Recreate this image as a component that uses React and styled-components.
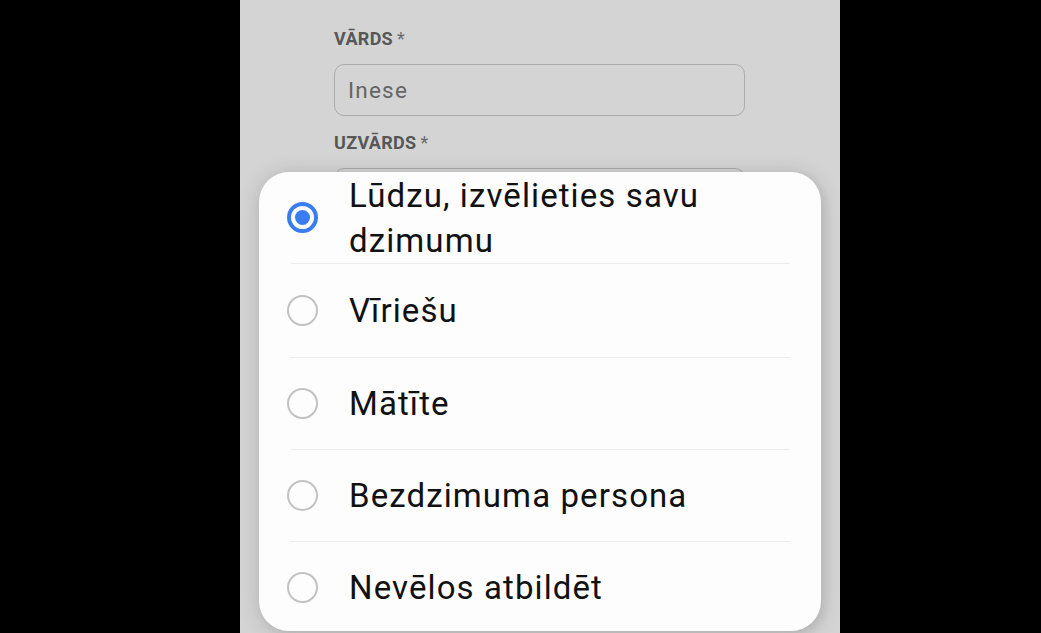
import React from "react";
import styled, { createGlobalStyle } from "styled-components";

const Global = createGlobalStyle`
  html, body { margin: 0; padding: 0; background: #000; }
  body { font-family: Roboto, "Noto Sans", sans-serif; }
`;

const Page = styled.div`
  display: flex;
  padding-left: 240px;
  height: 633px;
  background: #000;
`;

const Phone = styled.div`
  position: relative;
  width: 600px;
  height: 633px;
  background: #d4d4d4;
  overflow: hidden;
`;

const Form = styled.div`
  display: flex;
  flex-direction: column;
  padding: 28px 95px 0 94px;
`;

const Label = styled.div`
  font-family: Roboto, sans-serif;
  font-weight: 700;
  font-size: 18px;
  letter-spacing: 0.3px;
  color: #575757;
  line-height: 22px;
  margin-bottom: 14px;
  span {
    font-weight: 400;
    color: #6a6a6a;
    margin-left: 4px;
  }
`;

const Input = styled.div`
  box-sizing: border-box;
  height: 52px;
  border: 1px solid #ababab;
  border-radius: 10px;
  padding: 0 13px;
  display: flex;
  align-items: center;
  font-family: Roboto, sans-serif;
  font-size: 22.5px;
  letter-spacing: 1.2px;
  color: #656565;
  margin-bottom: 16px;
`;

const Sheet = styled.div`
  position: absolute;
  left: 19px;
  right: 19px;
  top: 172px;
  bottom: 2px;
  background: #fdfdfe;
  border-radius: 30px;
  box-shadow: 0 2px 22px rgba(0, 0, 0, 0.16), 4px 4px 10px rgba(0, 0, 0, 0.06);
  display: flex;
  flex-direction: column;
  overflow: hidden;
`;

const Option = styled.div`
  display: flex;
  align-items: center;
  gap: 31px;
  padding: 0 28px;
  height: ${(p) => p.$h}px;
  flex-shrink: 0;
`;

const Radio = styled.span`
  box-sizing: border-box;
  width: 31px;
  height: 31px;
  border-radius: 50%;
  flex-shrink: 0;
  border: ${(p) => (p.$on ? "4px solid #3a7cf2" : "2.5px solid #c2c2c2")};
  display: flex;
  align-items: center;
  justify-content: center;
  &::after {
    content: "";
    display: ${(p) => (p.$on ? "block" : "none")};
    width: 15px;
    height: 15px;
    border-radius: 50%;
    background: #3a7cf2;
  }
`;

const OptionText = styled.div`
  font-family: Roboto, sans-serif;
  font-size: 33px;
  line-height: 45px;
  letter-spacing: 1.1px;
  color: #111;
`;

const Divider = styled.div`
  height: 1px;
  margin: 0 31px 0 32px;
  background: #ececec;
  flex-shrink: 0;
`;

const options = [
  { text: "Lūdzu, izvēlieties savu dzimumu", on: true, h: 91, multi: true },
  { text: "Vīriešu", h: 93 },
  { text: "Mātīte", h: 91 },
  { text: "Bezdzimuma persona", h: 91 },
  { text: "Nevēlos atbildēt", h: 91 },
];

export default function App() {
  return (
    <>
      <Global />
      <Page>
        <Phone>
          <Form>
            <Label>
              VĀRDS<span>*</span>
            </Label>
            <Input>Inese</Input>
            <Label>
              UZVĀRDS<span>*</span>
            </Label>
            <Input />
          </Form>
          <Sheet>
            {options.map((o, i) => (
              <React.Fragment key={o.text}>
                {i > 0 && <Divider />}
                <Option $h={o.h}>
                  <Radio $on={o.on} />
                  <OptionText>
                    {o.multi ? (
                      <>
                        Lūdzu, izvēlieties savu
                        <br />
                        dzimumu
                      </>
                    ) : (
                      o.text
                    )}
                  </OptionText>
                </Option>
              </React.Fragment>
            ))}
          </Sheet>
        </Phone>
      </Page>
    </>
  );
}
